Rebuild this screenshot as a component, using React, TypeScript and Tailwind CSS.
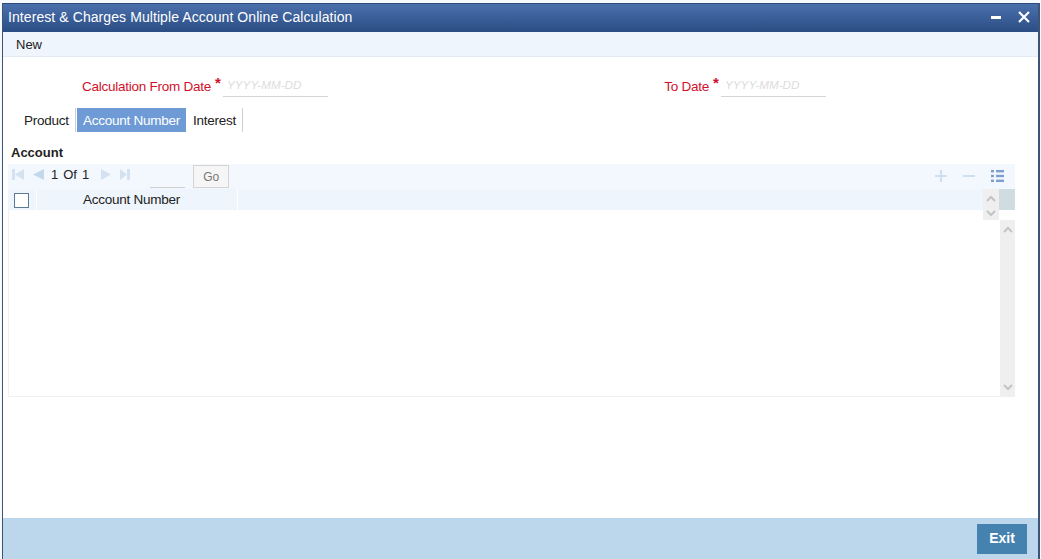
const font = { fontFamily: '"Liberation Sans", Arial, sans-serif' };

function Chevron({ up }: { up?: boolean }) {
  return (
    <svg width="10" height="7" viewBox="0 0 10 7" fill="none" stroke="#c4c4c4" strokeWidth="2">
      <path d={up ? "M1 6 L5 2 L9 6" : "M1 1 L5 5 L9 1"} />
    </svg>
  );
}

function Pager() {
  return (
    <div className="flex items-center h-[25px] bg-[#f3f8fe]">
      <div className="flex items-center mb-[4px]">
        <svg width="12" height="11" viewBox="0 0 12 11" fill="#d3e1f0" className="ml-[4px]">
          <rect x="0" y="0" width="3" height="11" />
          <path d="M12 0 V11 L3 5.5 Z" />
        </svg>
        <svg width="11" height="11" viewBox="0 0 11 11" fill="#c5d7ea" className="ml-[9px]">
          <path d="M11 0 V11 L0 5.5 Z" />
        </svg>
        <span className="ml-[7px] text-[13px] text-[#222] leading-none">1</span>
        <span className="ml-[5px] text-[13px] text-[#222] leading-none">Of</span>
        <span className="ml-[5px] text-[13px] text-[#222] leading-none">1</span>
        <svg width="10" height="11" viewBox="0 0 10 11" fill="#d3e1f0" className="ml-[12px]">
          <path d="M0 0 V11 L10 5.5 Z" />
        </svg>
        <svg width="10" height="11" viewBox="0 0 10 11" fill="#d3e1f0" className="ml-[9px]">
          <path d="M0 0 V11 L7 5.5 Z" />
          <rect x="7" y="0" width="3" height="11" />
        </svg>
      </div>
      <div className="ml-[20px] w-[35px] h-[24px] self-start border-b border-[#cfcfcf]" />
      <button className="ml-[8px] w-[36px] h-[23px] self-start mt-[1px] bg-[#f6f6f6] border border-[#d4d4d4] text-[12px] text-[#777] flex items-center justify-center">
        Go
      </button>
      <div className="ml-auto flex items-center mr-[11px] gap-[16px] mb-[2px]">
        <svg width="12" height="12" viewBox="0 0 12 12" fill="#d0dff0">
          <rect x="5" y="0" width="2" height="12" />
          <rect x="0" y="5" width="12" height="2" />
        </svg>
        <svg width="12" height="12" viewBox="0 0 12 12" fill="#d0dff0">
          <rect x="0" y="5" width="12" height="2" />
        </svg>
        <svg width="13" height="12" viewBox="0 0 13 12" fill="#7f9fd0">
          <rect x="0" y="0" width="3" height="2.4" />
          <rect x="5" y="0" width="8" height="2.4" />
          <rect x="0" y="4.8" width="3" height="2.4" />
          <rect x="5" y="4.8" width="8" height="2.4" />
          <rect x="0" y="9.6" width="3" height="2.4" />
          <rect x="5" y="9.6" width="8" height="2.4" />
        </svg>
      </div>
    </div>
  );
}

function DateField({ label, labelWidth, className }: { label: string; labelWidth: string; className?: string }) {
  return (
    <div className={`flex items-start ${className ?? ""}`}>
      <span className={`${labelWidth} text-right text-[13.5px] tracking-[-0.25px] text-[#d0112b] leading-none mt-[7px] whitespace-nowrap`}>{label}</span>
      <span className="ml-[4px] w-[6px] text-[15px] font-bold text-[#d0112b] leading-none mt-[2px]">*</span>
      <div className="ml-[2px] w-[105px] h-[24px] border-b border-[#d4d4d4] pl-[4px] text-[11.7px] italic text-[#dcdcdc] leading-[24px] whitespace-nowrap">
        YYYY-MM-DD
      </div>
    </div>
  );
}

export default function App() {
  return (
    <div style={font} className="w-[1041px] h-[559px] overflow-hidden bg-[#f6f9fd] flex flex-col pt-[3px] pl-[2px] pr-[1px]">
      <div className="flex-1 flex flex-col border-x-2 border-x-[#3d5478] border-l-[1px] bg-white min-h-0">
        <div className="h-[29px] shrink-0 bg-gradient-to-b from-[#4a70ac] to-[#2b4d84] border-t border-[#2f4a78] flex items-center pl-[5px] pb-[2px]">
          <span className="text-[14px] tracking-[0.08px] text-white">Interest &amp; Charges Multiple Account Online Calculation</span>
          <div className="ml-auto flex items-center gap-[17px] pr-[8px]">
            <div className="w-[10px] h-[3px] bg-white" />
            <svg width="12" height="12" viewBox="0 0 12 12" stroke="#fff" strokeWidth="2.2" fill="none">
              <path d="M1 1 L11 11 M11 1 L1 11" />
            </svg>
          </div>
        </div>

        <div className="h-[25px] shrink-0 bg-[#eef5fd] border-b border-[#e4ebf3] flex items-center pl-[13px] pt-[1px]">
          <span className="text-[13px] text-[#222]">New</span>
        </div>

        <div className="flex-1 min-h-0 flex flex-col">
          <div className="flex mt-[16px] h-[24px]">
            <DateField label="Calculation From Date" labelWidth="w-[130px]" className="ml-[78px]" />
            <DateField label="To Date" labelWidth="w-[45px]" className="ml-[336px]" />
          </div>

          <div className="flex h-[24px] mt-[11px] ml-[21px] text-[13.5px] tracking-[-0.25px]">
            <div className="w-[52px] flex items-center pt-[2px] text-[#222] border-r border-[#cfcfcf]">Product</div>
            <div className="ml-[1px] w-[109px] flex items-center justify-center pt-[2px] bg-[#6e9bd6] text-white">Account Number</div>
            <div className="w-[57px] flex items-center pl-[7px] pt-[2px] text-[#222] border-r border-[#cfcfcf]">Interest</div>
          </div>

          <div className="ml-[8px] mt-[13px] text-[13px] font-bold text-[#222] leading-[16px]">Account</div>

          <div className="ml-[5px] mr-[23px] mt-[3px] flex flex-col h-[233px]">
            <Pager />
            <div className="flex h-[21px]">
              <div className="w-[975px] bg-[#eef5fd] flex">
                <div className="w-[29px] flex items-center pl-[6px] pt-[2px] border-r border-white">
                  <div className="w-[15px] h-[15px] bg-white border border-[#5b7a96]" />
                </div>
                <div className="w-[201px] border-r border-white flex items-center justify-center text-[13.5px] tracking-[-0.25px] text-[#222] pr-[11px] pt-[2px]">
                  Account Number
                </div>
              </div>
              <div className="w-[16px] h-[31px] bg-[#efefef] flex flex-col items-center justify-between pt-[6px] pb-[3px]">
                <Chevron up />
                <Chevron />
              </div>
              <div className="w-[16px] bg-[#cfdde0]" />
            </div>
            <div className="flex-1 min-h-0 flex justify-end border-b border-l border-[#f0f0f0]">
              <div className="w-[15px] mt-[10px] bg-[#efefef] flex flex-col items-center justify-between pt-[6px] pb-[5px]">
                <Chevron up />
                <Chevron />
              </div>
            </div>
          </div>
        </div>

        <div className="h-[41px] shrink-0 bg-[#bcd7ec] flex items-center justify-end pr-[11px]">
          <button className="w-[50px] h-[30px] bg-[#4682b0] text-white text-[14px] font-bold">Exit</button>
        </div>
      </div>
    </div>
  );
}
